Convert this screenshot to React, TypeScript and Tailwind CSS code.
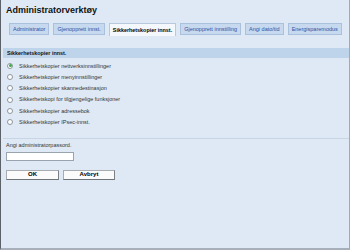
import React from "react";

const tabs = [
  { label: "Administrator", active: false },
  { label: "Gjenopprett innst.", active: false },
  { label: "Sikkerhetskopier innst.", active: true },
  { label: "Gjenopprett innstilling", active: false },
  { label: "Angi dato/tid", active: false },
  { label: "Energisparemodus", active: false },
];

const options = [
  "Sikkerhetskopier nettverksinnstillinger",
  "Sikkerhetskopier menyinnstillinger",
  "Sikkerhetskopier skannedestinasjon",
  "Sikkerhetskopi for tilgjengelige funksjoner",
  "Sikkerhetskopier adressebok",
  "Sikkerhetskopier IPsec-innst.",
];

export default function App() {
  return (
    <div className="w-[350px] h-[250px] overflow-hidden bg-[#dfe9f5] border-l border-l-[#5d6268] border-r border-r-[#9eaab6] border-b-2 border-b-[#a6afba] font-['Liberation_Sans',Arial,sans-serif] text-black">
      <div className="pl-[5px] pt-[5px] text-[9px] leading-[10px] font-bold text-[#111]">
        Administratorverktøy
      </div>
      <div className="flex gap-[4px] pl-[8px] pt-[8px]">
        {tabs.map((t) =>
          t.active ? (
            <div
              key={t.label}
              className="h-[13px] px-[3px] flex items-center border border-[#b9c9dc] border-b-0 bg-[#f4f7fb] text-[5.4px] font-bold text-black whitespace-nowrap"
            >
              {t.label}
            </div>
          ) : (
            <div
              key={t.label}
              className="h-[12px] px-[3px] flex items-center border border-[#a9c1dd] bg-[#c6d9ef] text-[5.5px] text-[#2f52a3] whitespace-nowrap"
            >
              {t.label}
            </div>
          )
        )}
      </div>
      <div className="ml-[2px] mt-[12px] h-[10px] bg-[#bed4eb] pl-[4px] flex items-center text-[5.4px] font-bold text-[#111]">
        Sikkerhetskopier innst.
      </div>
      <div className="ml-[6px] mt-[2px] flex flex-col">
        {options.map((o, i) => (
          <div key={o} className="h-[11.3px] flex items-center gap-[6px]">
            <div className="w-[6px] h-[6px] rounded-full border border-[#8d959e] bg-white flex items-center justify-center">
              {i === 0 && <div className="w-[3px] h-[3px] rounded-full bg-[#3cab3c]" />}
            </div>
            <span className="text-[5.5px] text-[#333] whitespace-nowrap">{o}</span>
          </div>
        ))}
      </div>
      <div className="ml-[2px] mt-[10px] h-px bg-[#c8d5e4]" />
      <div className="pl-[5px] pt-[3px]">
        <div className="text-[5.5px] leading-[7px] text-[#333]">Angi administratorpassord.</div>
        <div className="mt-[3px] w-[68px] h-[9px] bg-white border border-[#9aa4ae]" />
        <div className="mt-[9px] flex gap-[4px]">
          <div className="w-[53px] h-[10px] bg-[#fbfbfb] border border-[#a8acb0] border-b-[#6f7478] border-r-[#7c8186] flex items-center justify-center text-[6px] font-bold">
            OK
          </div>
          <div className="w-[52px] h-[10px] bg-[#fbfbfb] border border-[#a8acb0] border-b-[#6f7478] border-r-[#7c8186] flex items-center justify-center text-[6px] font-bold">
            Avbryt
          </div>
        </div>
      </div>
    </div>
  );
}
